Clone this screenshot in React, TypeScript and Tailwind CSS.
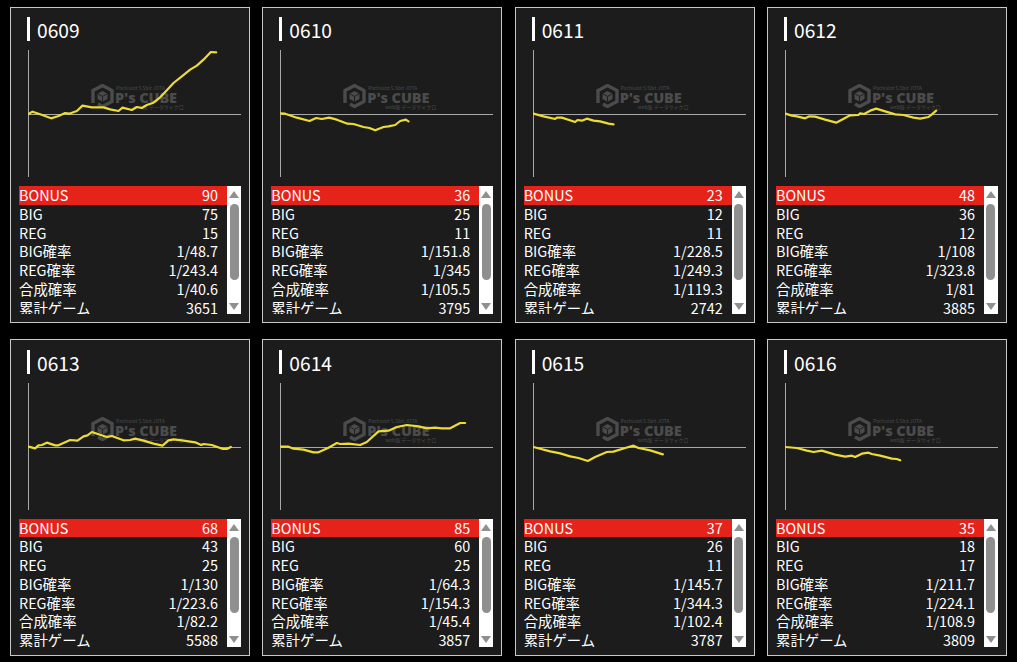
import React from 'react';

type Machine = {
  id: string;
  bonus: number;
  big: number;
  reg: number;
  bigRate: string;
  regRate: string;
  totalRate: string;
  games: number;
  line: number[][];
};

const machines: Machine[] = [
  {
    id: '0609', bonus: 90, big: 75, reg: 15, bigRate: '1/48.7', regRate: '1/243.4', totalRate: '1/40.6', games: 3651,
    line: [[0,0],[12,-7],[35,1],[68,13],[90,6],[110,-3],[122,-1],[145,-9],[162,-25],[190,-20],[225,-20],[245,-14],[270,-9],[282,-19],[310,-12],[325,-21],[340,-18],[355,-27],[375,-34],[395,-50],[415,-71],[435,-93],[460,-113],[485,-133],[505,-145],[525,-163],[547,-186],[563,-185]],
  },
  {
    id: '0610', bonus: 36, big: 25, reg: 11, bigRate: '1/151.8', regRate: '1/345', totalRate: '1/105.5', games: 3795,
    line: [[0,-2],[14,-1],[49,11],[87,21],[107,12],[124,15],[146,11],[169,17],[201,29],[219,30],[249,39],[267,42],[284,49],[309,39],[324,37],[344,33],[359,21],[376,17],[384,22]],
  },
  {
    id: '0611', bonus: 23, big: 12, reg: 11, bigRate: '1/228.5', regRate: '1/249.3', totalRate: '1/119.3', games: 2742,
    line: [[0,-1],[30,7],[65,15],[70,11],[85,11],[125,24],[132,18],[145,20],[160,14],[180,20],[200,22],[225,29],[240,31]],
  },
  {
    id: '0612', bonus: 48, big: 36, reg: 12, bigRate: '1/108', regRate: '1/323.8', totalRate: '1/81', games: 3885,
    line: [[0,-1],[19,5],[34,7],[59,13],[72,7],[89,8],[119,17],[152,26],[169,17],[194,4],[219,3],[224,-2],[236,0],[254,-10],[272,-16],[299,-8],[329,1],[354,3],[384,11],[404,14],[429,9],[439,1],[452,-10]],
  },
  {
    id: '0613', bonus: 68, big: 43, reg: 25, bigRate: '1/130', regRate: '1/223.6', totalRate: '1/82.2', games: 5588,
    line: [[0,-1],[20,4],[30,-5],[40,-6],[55,-13],[80,-5],[90,-5],[125,-21],[147,-19],[165,-32],[177,-35],[190,-45],[235,-30],[250,-33],[285,-20],[305,-21],[320,-25],[345,-19],[375,-10],[402,-4],[420,-20],[435,-23],[460,-20],[500,-14],[518,-6],[525,-9],[550,-6],[583,6],[595,6],[607,0]],
  },
  {
    id: '0614', bonus: 85, big: 60, reg: 25, bigRate: '1/64.3', regRate: '1/154.3', totalRate: '1/45.4', games: 3857,
    line: [[0,-1],[24,-1],[39,5],[69,8],[99,16],[114,16],[144,2],[169,-12],[179,-9],[204,-10],[239,-6],[259,-15],[294,-47],[324,-49],[349,-60],[379,-66],[414,-62],[439,-56],[464,-58],[484,-56],[509,-56],[539,-72],[554,-72]],
  },
  {
    id: '0615', bonus: 37, big: 26, reg: 11, bigRate: '1/145.7', regRate: '1/344.3', totalRate: '1/102.4', games: 3787,
    line: [[0,0],[50,13],[80,19],[110,28],[135,33],[163,42],[185,30],[220,15],[240,14],[275,3],[300,-4],[315,3],[350,10],[388,22]],
  },
  {
    id: '0616', bonus: 35, big: 18, reg: 17, bigRate: '1/211.7', regRate: '1/224.1', totalRate: '1/108.9', games: 3809,
    line: [[0,0],[34,3],[64,11],[84,15],[109,11],[149,23],[179,29],[199,26],[209,30],[229,20],[249,17],[259,21],[284,26],[319,35],[334,36],[344,40]],
  },
];

function Watermark() {
  return (
    <div className="absolute left-[63px] top-[34px] flex items-center text-[#4b4b4b]">
      <svg width="23" height="24" viewBox="0 0 23 24" fill="none">
        <path d="M2 19V6.5L11.5 1.5L21 6.5V17.5L11.5 22.5L7 20" stroke="#4b4b4b" strokeWidth="3.4" />
        <path d="M11.5 7L16.5 9.7V15L11.5 17.7L6.5 15V9.7Z" fill="#4b4b4b" />
        <path d="M6.5 9.7L11.5 12.4L16.5 9.7M11.5 12.4V17.7" stroke="#1c1c1c" strokeWidth="0.9" />
      </svg>
      <div className="relative ml-[1px] h-[24px] w-[64px]">
        <div className="absolute left-[1px] top-[1px] text-[5px] leading-[5px] whitespace-nowrap">Pachislot 5.5bit JOTA</div>
        <div className="absolute left-0 top-[7px] text-[14.5px] leading-[13px] font-extrabold tracking-[-0.1px] whitespace-nowrap [font-family:'Open_Sans',sans-serif]">P&apos;s CUBE</div>
        <div className="absolute left-[18px] top-[20px] text-[5px] leading-[5px] whitespace-nowrap">web版 データサイクロ</div>
      </div>
    </div>
  );
}

function Chart({ line }: { line: number[][] }) {
  const baseY = 64;
  const points = line.map(([x, y]) => `${x / 3 + 0.5},${y / 3 + baseY}`).join(' ');
  return (
    <div className="relative mt-[9px] ml-[17px] h-[127px] w-[213px]">
      <Watermark />
      <svg className="absolute inset-0" width="213" height="127" viewBox="0 0 213 127" fill="none">
        <path d="M0.5 0V127" stroke="#a8a8a8" />
        <path d={`M0 ${baseY + 0.5}H213`} stroke="#a8a8a8" />
        <polyline points={points} stroke="#ecdc35" strokeWidth="2.2" strokeLinejoin="round" strokeLinecap="round" />
      </svg>
    </div>
  );
}

function Scrollbar() {
  return (
    <div className="flex h-full w-[14px] flex-col items-center bg-white">
      <div className="mt-[5px] h-0 w-0 border-x-[5px] border-b-[7px] border-x-transparent border-b-[#8f8f8f]" />
      <div className="mt-[6px] h-[76px] w-[9px] rounded-[5px] bg-[#8f8f8f]" />
      <div className="mt-[23px] h-0 w-0 border-x-[5px] border-t-[7px] border-x-transparent border-t-[#8f8f8f]" />
    </div>
  );
}

function Stats({ m }: { m: Machine }) {
  const rows: [string, string | number][] = [
    ['BIG', m.big],
    ['REG', m.reg],
    ['BIG確率', m.bigRate],
    ['REG確率', m.regRate],
    ['合成確率', m.totalRate],
    ['累計ゲーム', m.games],
  ];
  return (
    <div className="mt-[9px] ml-[8px] flex h-[128px] w-[222px] overflow-hidden text-[14.4px] leading-[18.75px] text-white">
      <div className="w-[208px]">
        <div className="flex h-[18.75px] justify-between bg-[#e5231b] pr-[9px]">
          <span>BONUS</span>
          <span>{m.bonus}</span>
        </div>
        {rows.map(([label, value]) => (
          <div key={label} className="flex h-[18.75px] justify-between pr-[9px]">
            <span>{label}</span>
            <span>{value}</span>
          </div>
        ))}
      </div>
      <Scrollbar />
    </div>
  );
}

function Card({ m }: { m: Machine }) {
  return (
    <div className="h-[316.5px] border border-[#c8c8c8] bg-[#1c1c1c]">
      <div className="mt-[9.6px] ml-[16px] flex h-[24px] items-center">
        <div className="h-[24px] w-[3px] bg-white" />
        <div className="ml-[7px] translate-y-[1px] text-[19.2px] leading-[24px] text-white">{m.id}</div>
      </div>
      <Chart line={m.line} />
      <Stats m={m} />
    </div>
  );
}

export default function App() {
  return (
    <div className="h-[662px] w-[1017px] overflow-hidden bg-black [font-family:'Noto_Sans_CJK_JP','Noto_Sans',sans-serif]">
      <div className="grid grid-cols-4 gap-x-[12.33px] gap-y-[16px] px-[10px] pt-[6.6px]">
        {machines.map((m) => (
          <Card key={m.id} m={m} />
        ))}
      </div>
    </div>
  );
}
